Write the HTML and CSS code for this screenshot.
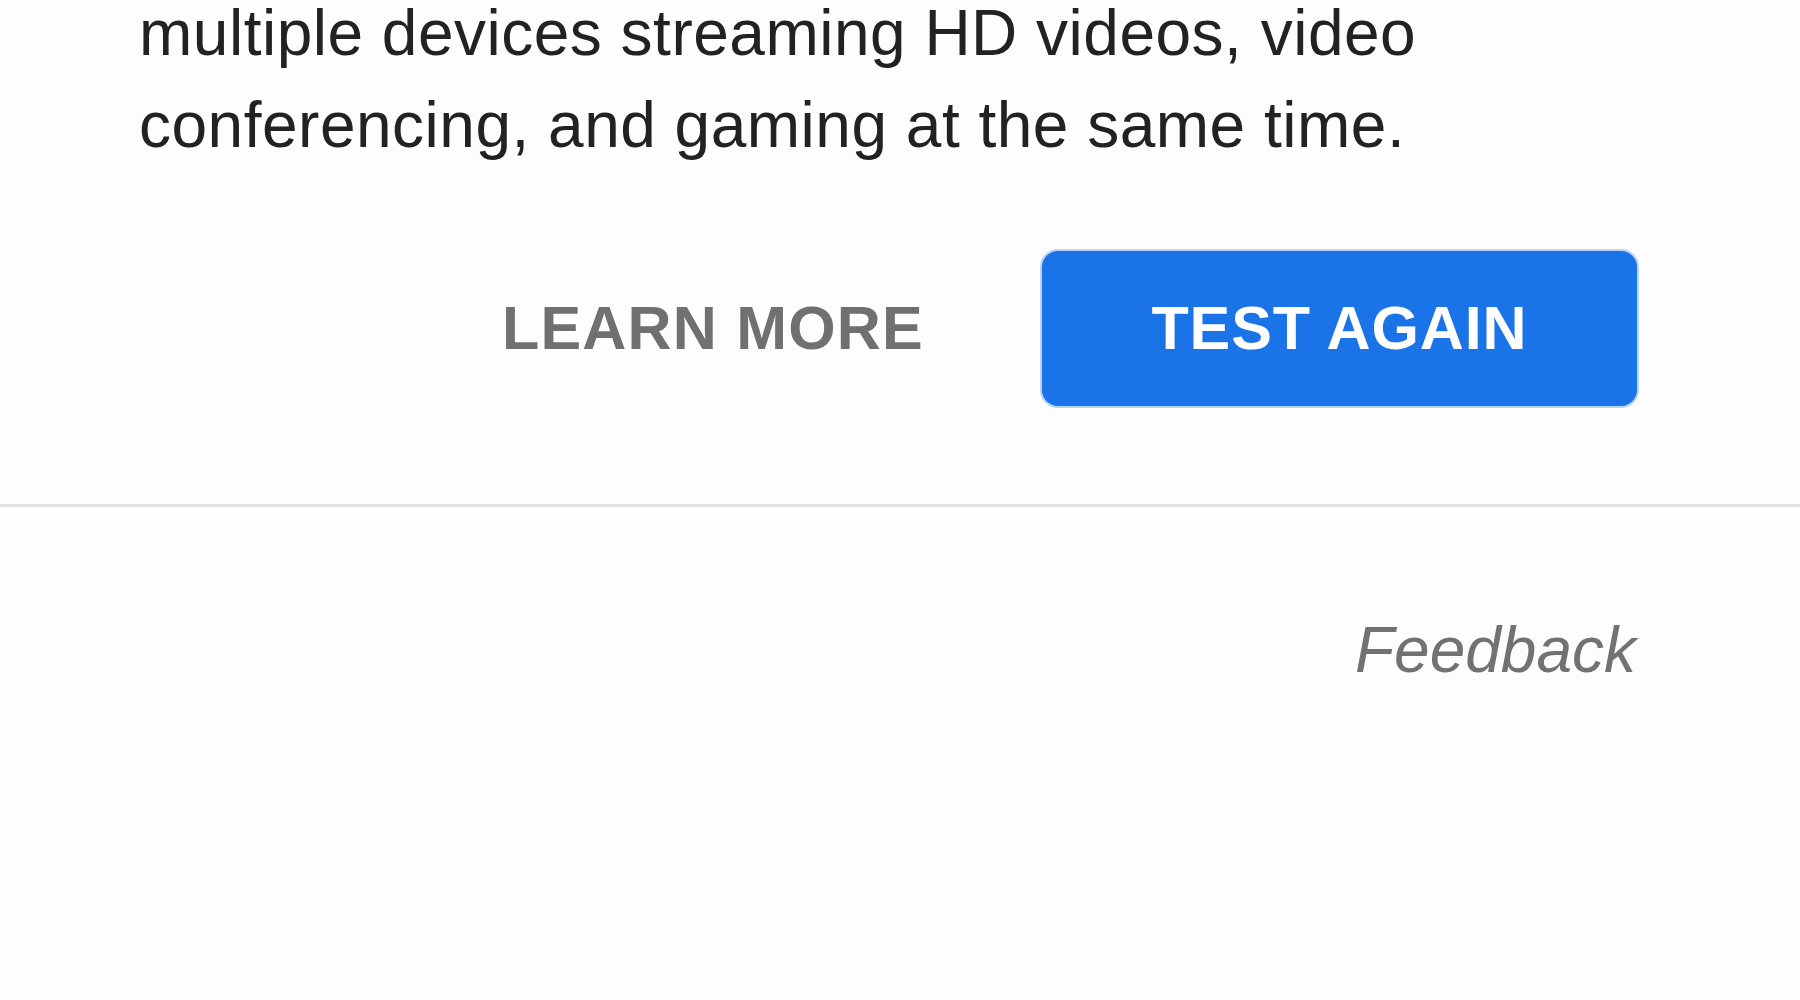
FILE: index.html
```html
<!DOCTYPE html>
<html lang="en">
<head>
<meta charset="utf-8">
<title>Speed test result</title>
<link rel="stylesheet" href="styles.css">
</head>
<body>
  <main class="result">
    <p class="description">multiple devices streaming HD videos, video conferencing, and gaming at the same time.</p>
    <div class="actions">
      <button class="btn btn-text">LEARN MORE</button>
      <button class="btn btn-primary">TEST AGAIN</button>
    </div>
  </main>
  <footer class="footer">
    <a class="feedback">Feedback</a>
  </footer>
</body>
</html>
```

FILE: styles.css
```css
html, body {
  margin: 0;
  padding: 0;
  background: #fdfdfd;
  height: 100%;
  overflow: hidden;
}

body {
  font-family: "Liberation Sans", Arial, sans-serif;
  color: #222222;
}

.result {
  padding: 0 161px 0 139px;
  border-bottom: 3px solid #e2e2e2;
  padding-bottom: 98px;
}

.description {
  margin: -13px 0 0 0;
  font-size: 64px;
  line-height: 92px;
  letter-spacing: 0.5px;
  width: 1340px;
}

.actions {
  display: flex;
  justify-content: flex-end;
  align-items: center;
  gap: 8px;
  margin-top: 80px;
}

.btn {
  font-family: "Liberation Sans", Arial, sans-serif;
  font-weight: 700;
  font-size: 61px;
  height: 155px;
  padding: 0 110px;
  border: none;
  border-radius: 16px;
  background: transparent;
  cursor: pointer;
  line-height: 1;
  white-space: nowrap;
}

.btn-text {
  color: #707070;
  padding: 0 110px;
  letter-spacing: 1.2px;
}

.btn-primary {
  background: #1b73e8;
  color: #ffffff;
  width: 595px;
  padding: 0;
  text-align: center;
  letter-spacing: 0.9px;
  box-shadow: 0 0 0 2px #b9d3f6;
  margin-right: 2px;
}

.footer {
  display: flex;
  justify-content: flex-end;
  padding: 97px 164px 0 0;
}

.feedback {
  font-size: 64px;
  line-height: 92px;
  font-style: italic;
  color: #727272;
}
```
